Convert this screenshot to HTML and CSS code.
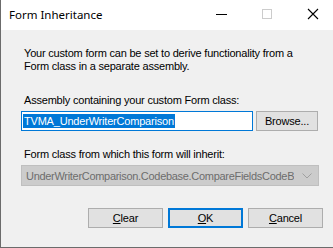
FILE: index.html
```html
<!DOCTYPE html>
<html>
<head>
<meta charset="utf-8">
<link rel="stylesheet" href="styles.css">
</head>
<body>
<div class="window">
  <div class="titlebar">
    <span class="title">Form Inheritance</span>
    <div class="controls">
      <svg class="ctl" width="46" height="30" viewBox="0 0 46 30"><line x1="18" y1="14.5" x2="29" y2="14.5" stroke="#000" stroke-width="1"/></svg>
      <svg class="ctl" width="46" height="30" viewBox="0 0 46 30"><rect x="18.5" y="9.5" width="9" height="9" fill="none" stroke="#cccccc" stroke-width="1"/></svg>
      <svg class="ctl" width="46" height="30" viewBox="0 0 46 30"><path d="M18 9 L28 19 M28 9 L18 19" stroke="#000" stroke-width="1.1" fill="none"/></svg>
    </div>
  </div>
  <div class="client">
    <p class="desc">Your custom form can be set to derive functionality from a<br>Form class in a separate assembly.</p>
    <div class="label lbl1">Assembly containing your custom Form class:</div>
    <div class="row">
      <div class="textbox"><span class="sel">TVMA_UnderWriterComparison</span></div>
      <div class="btn browse">Browse...</div>
    </div>
    <div class="label lbl2">Form class from which this form will inherit:</div>
    <div class="combo">
      <span class="combo-text">UnderWriterComparison.Codebase.CompareFieldsCodeBase</span>
      <svg class="chev" width="10" height="6" viewBox="0 0 10 6"><path d="M0.5 0.5 L5 5 L9.5 0.5" stroke="#a0a0a0" fill="none" stroke-width="1"/></svg>
    </div>
    <div class="buttons">
      <div class="btn"><u>C</u>lear</div>
      <div class="btn ok"><u>O</u>K</div>
      <div class="btn"><u>C</u>ancel</div>
    </div>
  </div>
</div>
</body>
</html>
```
FILE: styles.css
```css
html, body {
  margin: 0;
  padding: 0;
  background: #ffffff;
}
.window {
  width: 333px;
  height: 248px;
  box-sizing: border-box;
  border-left: 1px solid #6b6b6b;
  border-bottom: 1px solid #6b6b6b;
  display: flex;
  flex-direction: column;
  overflow: hidden;
}
.titlebar {
  height: 30px;
  background: #ffffff;
  display: flex;
  align-items: center;
  justify-content: space-between;
  flex-shrink: 0;
}
.title {
  font-family: "Noto Sans", sans-serif;
  font-size: 11.5px;
  color: #000;
  padding-left: 8px;
  padding-bottom: 1px;
}
.controls {
  display: flex;
  margin-right: -3px;
}
.ctl {
  display: block;
}
.client {
  flex: 1;
  background: #f0f0f0;
  padding: 17px 0 0 20px;
  font-family: "Liberation Sans", Arial, sans-serif;
  font-size: 11px;
  letter-spacing: -0.2px;
  color: #000;
}
.desc {
  margin: 0 0 0 3px;
  line-height: 13px;
}
.label {
  line-height: 13px;
  margin-left: 3px;
}
.lbl1 {
  margin-top: 21px;
}
.lbl2 {
  margin-top: 17px;
}
.row {
  display: flex;
  margin-top: 4px;
  gap: 3px;
}
.textbox {
  width: 232px;
  height: 20px;
  box-sizing: border-box;
  border: 1px solid #0078d7;
  background: #fff;
  padding: 2px 1px;
  line-height: 14px;
  white-space: nowrap;
}
.sel {
  background: #0078d7;
  color: #fff;
  display: inline-block;
  padding: 0 1px 0 1px;
  line-height: 14px;
}
.btn {
  height: 20px;
  box-sizing: border-box;
  border: 1px solid #adadad;
  background: #e1e1e1;
  display: flex;
  align-items: center;
  justify-content: center;
  width: 75px;
  line-height: 13px;
}
.btn u {
  text-decoration: underline;
  text-underline-offset: 1px;
}
.browse {
  width: 62px;
}
.combo {
  margin-top: 4px;
  width: 298px;
  height: 21px;
  box-sizing: border-box;
  border: 1px solid #bfbfbf;
  background: #cccccc;
  display: flex;
  align-items: center;
  padding: 0 4px 0 4px;
  color: #6d6d6d;
}
.combo-text {
  flex: 1;
  overflow: hidden;
  white-space: nowrap;
  width: 275px;
  letter-spacing: -0.3px;
}
.chev {
  margin-left: 8px;
  margin-right: 2px;
}
.buttons {
  display: flex;
  gap: 5px;
  margin-top: 22px;
  margin-left: 67px;
}
.ok {
  border: 2px solid #0078d7;
}
```
